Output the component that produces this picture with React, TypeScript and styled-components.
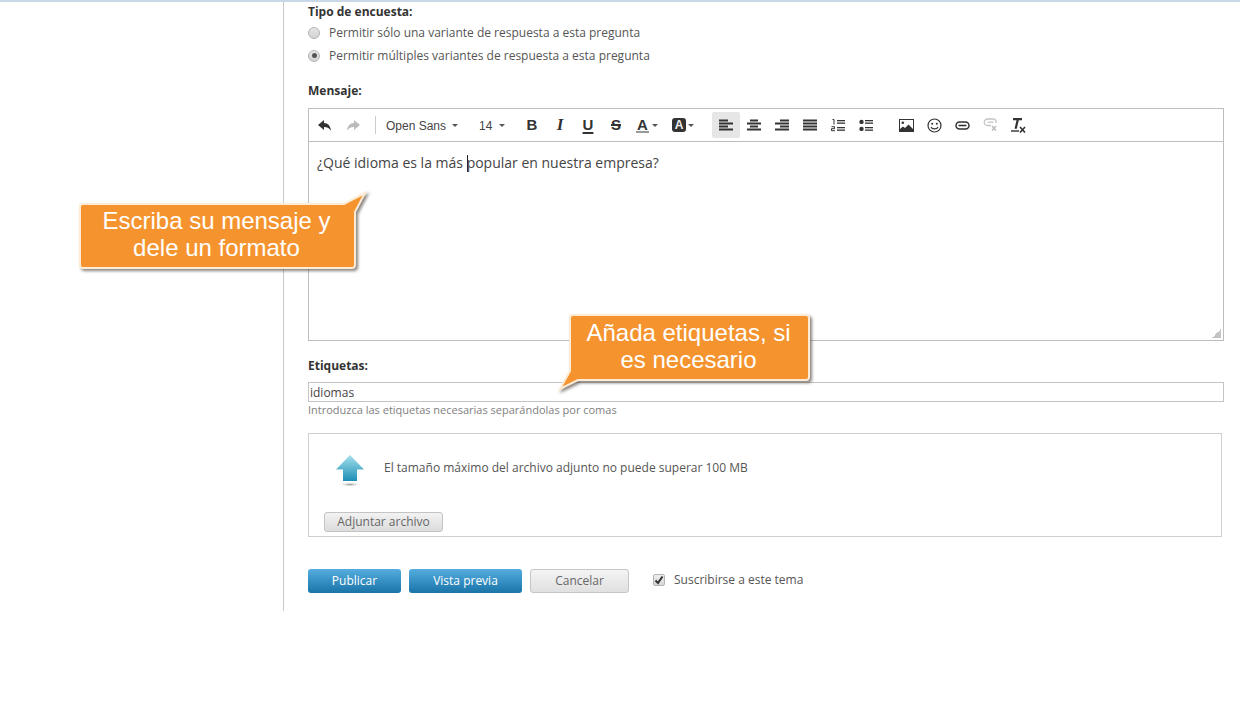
import React from "react";
import styled, { createGlobalStyle } from "styled-components";

const Global = createGlobalStyle`
  html, body { margin: 0; padding: 0; background: #fff; }
  body { font-family: "Open Sans", "Liberation Sans", sans-serif; color: #444; overflow: hidden; }
`;

const Page = styled.div`
  position: relative;
  width: 1240px;
  height: 708px;
  border-top: 2px solid #c9d8e8;
  box-sizing: border-box;
  overflow: hidden;
`;
const Shell = styled.div`
  display: flex;
  height: 609px;
`;
const Sidebar = styled.aside`
  width: 283px;
  border-right: 1px solid #c8c8c8;
`;
const Main = styled.main`
  width: 916px;
  margin-left: 24px;
  display: flex;
  flex-direction: column;
`;
const FieldLabel = styled.div<{ $top: number; $h?: number }>`
  margin-top: ${(p) => p.$top}px;
  height: ${(p) => p.$h ?? 20}px;
  line-height: 20px;
  font-size: 12px;
  font-weight: 700;
  color: #333;
`;
const RadioRow = styled.label`
  display: flex;
  align-items: center;
  height: 23px;
  font-size: 12px;
  color: #555;
`;
const Radio = styled.span<{ $on?: boolean }>`
  position: relative;
  width: 12px;
  height: 12px;
  margin-right: 9px;
  border: 1px solid #b4b4b4;
  border-radius: 50%;
  box-sizing: border-box;
  background: linear-gradient(#e6e6e6, #d2d2d2);
  &::after {
    content: "";
    display: ${(p) => (p.$on ? "block" : "none")};
    position: absolute;
    left: 2.5px;
    top: 2.5px;
    width: 5px;
    height: 5px;
    border-radius: 50%;
    background: #555;
  }
`;
const Editor = styled.div`
  margin-top: 7px;
  height: 233px;
  border: 1px solid #bdbdbd;
  box-sizing: border-box;
  display: flex;
  flex-direction: column;
`;
const Toolbar = styled.div`
  display: flex;
  align-items: center;
  height: 32px;
  padding-left: 2px;
  border-bottom: 1px solid #bdbdbd;
  flex: none;
`;
const ToolBtn = styled.span<{ $active?: boolean; $gap?: number }>`
  display: flex;
  align-items: center;
  justify-content: center;
  flex: none;
  width: 28px;
  height: 26px;
  margin-left: ${(p) => p.$gap ?? 0}px;
  border-radius: 2px;
  background: ${(p) => (p.$active ? "#e6e6e6" : "transparent")};
  color: #333;
`;
const Sep = styled.span`
  width: 1px;
  height: 18px;
  margin: 0 10px 0 8px;
  background: #ccc;
  flex: none;
`;
const Drop = styled.span<{ $w: number; $gap?: number }>`
  display: flex;
  align-items: center;
  justify-content: space-between;
  flex: none;
  width: ${(p) => p.$w}px;
  margin-left: ${(p) => p.$gap ?? 0}px;
  padding-top: 1px;
  font-family: "Liberation Sans", Arial, sans-serif;
  font-size: 12px;
  color: #444;
`;
const Caret = styled.span`
  width: 0;
  height: 0;
  border-left: 3px solid transparent;
  border-right: 3px solid transparent;
  border-top: 3px solid #555;
`;
const Letter = styled.span<{ $italic?: boolean; $under?: boolean; $strike?: boolean }>`
  font-family: ${(p) => (p.$italic ? '"Liberation Serif"' : '"Liberation Sans"')}, Arial, sans-serif;
  font-size: ${(p) => (p.$italic ? 17 : 15)}px;
  font-weight: 700;
  line-height: 14px;
  color: #333;
  font-style: ${(p) => (p.$italic ? "italic" : "normal")};
  text-decoration: ${(p) => (p.$under ? "underline" : p.$strike ? "line-through" : "none")};
  text-decoration-thickness: 2px;
  text-underline-offset: 2px;
`;
const ColorA = styled.span`
  font-family: "Liberation Sans", Arial, sans-serif;
  font-size: 15px;
  font-weight: 700;
  line-height: 13px;
  color: #333;
  border-bottom: 2px solid #999;
  padding: 0 1px;
  margin-right: 3px;
`;
const BoxA = styled.span`
  width: 14px;
  height: 14px;
  border-radius: 3px;
  background: #333;
  color: #eee;
  font-family: "Liberation Sans", Arial, sans-serif;
  font-size: 12px;
  font-weight: 700;
  line-height: 14px;
  text-align: center;
  margin-right: 2px;
`;
const Body = styled.div`
  position: relative;
  flex: 1;
  padding: 11px 8px;
  font-size: 14px;
  line-height: 20px;
  color: #444;
`;
const TextCaret = styled.span`
  display: inline-block;
  width: 1px;
  height: 17px;
  margin-right: -1px;
  vertical-align: -4px;
  background: #222;
`;
const Grip = styled.span`
  position: absolute;
  right: 2px;
  bottom: 2px;
  width: 9px;
  height: 9px;
  background: linear-gradient(135deg, transparent 50%, #c4c4c4 50%);
`;
const TagInput = styled.div`
  margin-top: 6px;
  height: 20px;
  border: 1px solid #c4c4c4;
  box-sizing: border-box;
  padding-left: 1px;
  font-size: 12px;
  line-height: 19px;
  color: #444;
`;
const Hint = styled.div`
  height: 16px;
  line-height: 16px;
  font-size: 11px;
  color: #808080;
`;
const AttachBox = styled.section`
  margin-top: 15px;
  width: 914px;
  height: 104px;
  border: 1px solid #cfcfcf;
  box-sizing: border-box;
  padding: 21px 15px 0;
  display: flex;
  flex-direction: column;
  align-items: flex-start;
`;
const AttachInfo = styled.div`
  display: flex;
  align-items: flex-start;
  height: 57px;
  padding-left: 12px;
  font-size: 12px;
  color: #555;
`;
const AttachText = styled.span`
  margin-left: 20px;
  line-height: 26px;
`;
const AttachBtn = styled.button`
  width: 119px;
  height: 20px;
  padding: 0 0 2px;
  border: 1px solid #c4c4c4;
  border-radius: 3px;
  background: linear-gradient(#f2f2f2, #dcdcdc);
  font-family: inherit;
  font-size: 12px;
  color: #666;
`;
const Actions = styled.div`
  margin-top: 32px;
  display: flex;
  align-items: center;
`;
const Btn = styled.button<{ $w: number; $ghost?: boolean }>`
  width: ${(p) => p.$w}px;
  height: 24px;
  margin-right: 8px;
  padding: 0 0 2px;
  border-radius: 3px;
  border: ${(p) => (p.$ghost ? "1px solid #c6c6c6" : "none")};
  background: ${(p) =>
    p.$ghost ? "linear-gradient(#f4f4f4, #e0e0e0)" : "linear-gradient(#55addf, #1a74a8)"};
  color: ${(p) => (p.$ghost ? "#666" : "#fff")};
  font-family: inherit;
  font-size: 12px;
  font-weight: ${(p) => (p.$ghost ? 400 : 500)};
`;
const Subscribe = styled.label`
  display: flex;
  align-items: center;
  margin: -3px 0 0 16px;
  font-size: 12px;
  color: #555;
`;
const Check = styled.span`
  display: flex;
  align-items: center;
  justify-content: center;
  width: 12px;
  height: 12px;
  margin-right: 9px;
  border: 1px solid #b4b4b4;
  border-radius: 2px;
  box-sizing: border-box;
  background: linear-gradient(#eee, #d6d6d6);
`;
const Bubble = styled.div<{ $x: number; $y: number; $w: number; $h: number }>`
  position: absolute;
  left: ${(p) => p.$x}px;
  top: ${(p) => p.$y}px;
  width: ${(p) => p.$w}px;
  height: ${(p) => p.$h}px;
  padding-bottom: 4px;
  box-sizing: border-box;
  display: flex;
  align-items: center;
  justify-content: center;
  text-align: center;
  font-family: "Liberation Sans", Arial, sans-serif;
  font-size: 24px;
  line-height: 27px;
  color: #fff;
`;
const BubbleShape = styled.svg`
  position: absolute;
  left: -20px;
  top: -20px;
  overflow: visible;
  filter: drop-shadow(2px 2px 1.5px rgba(60, 50, 40, 0.6));
`;
const BubbleText = styled.span`
  position: relative;
  left: -1px;
`;

const S = { fill: "none", stroke: "#333" } as const;

const Undo = ({ color = "#333" }: { color?: string }) => (
  <svg width="16" height="14" viewBox="0 0 16 14"><path d="M7 2 1 7l6 5V9c3 0 5 1 7 3.500C13.500 8 11 5 7 5z" fill={color} /></svg>
);
const Redo = ({ color = "#bbb" }: { color?: string }) => (
  <svg width="16" height="14" viewBox="0 0 16 14"><path d="M9 2l6 5-6 5V9c-3 0-5 1-7 3.500C2.500 8 5 5 9 5z" fill={color} /></svg>
);
const Align = ({ rows }: { rows: [number, number][] }) => (
  <svg width="14" height="12" viewBox="0 0 14 12">
    {rows.map(([x, w], i) => (
      <rect key={i} x={x} y={i * 3 + 0.500} width={w} height="2" fill="#333" />
    ))}
  </svg>
);
const ListLines = () => (
  <>
    <rect x="6" y="1" width="8" height="1.300" fill="#333" />
    <rect x="6" y="3.500" width="8" height="1.300" fill="#333" />
    <rect x="6" y="8" width="8" height="1.300" fill="#333" />
    <rect x="6" y="10.500" width="8" height="1.300" fill="#333" />
  </>
);
const OrderedList = () => (
  <svg width="14" height="13" viewBox="0 0 14 13">
    <path d="M1.500 0.500h1.500v5M0.500 7.700h3v2h-3v2h3.500" {...S} strokeWidth="1" />
    <ListLines />
  </svg>
);
const BulletList = () => (
  <svg width="14" height="13" viewBox="0 0 14 13">
    <circle cx="2.500" cy="2.900" r="2.200" fill="#333" />
    <circle cx="2.500" cy="9.900" r="2.200" fill="#333" />
    <ListLines />
  </svg>
);
const ImageIcon = () => (
  <svg width="15" height="13" viewBox="0 0 15 13">
    <rect x="0.500" y="0.500" width="14" height="12" fill="#fff" stroke="#333" />
    <circle cx="3.800" cy="3.800" r="1.300" fill="#333" />
    <path d="M1 12V10l3-2.500 2 1.500 3.500-3.500L14 10v2z" fill="#333" />
  </svg>
);
const Smile = () => (
  <svg width="15" height="15" viewBox="0 0 15 15">
    <circle cx="7.500" cy="7.500" r="6.500" {...S} strokeWidth="1.200" />
    <circle cx="5.200" cy="5.800" r="1" fill="#333" />
    <circle cx="9.800" cy="5.800" r="1" fill="#333" />
    <path d="M4 9c1 2.500 6 2.500 7 0" {...S} strokeWidth="1.200" />
  </svg>
);
const LinkIcon = () => (
  <svg width="15" height="9" viewBox="0 0 15 9">
    <rect x="1" y="1" width="13" height="7" rx="3.500" {...S} strokeWidth="1.500" />
    <path d="M3.500 4.500h8" {...S} strokeWidth="1.600" />
  </svg>
);
const Unlink = () => (
  <svg width="15" height="14" viewBox="0 0 15 14">
    <path d="M8 7.500H4.500a3 3 0 0 1 0-6.500h6a3 3 0 0 1 2.500 4M4.500 4.200h6" fill="none" stroke="#c4c4c4" strokeWidth="1.300" />
    <path d="M9 8l4 4.500M13 8l-4 4.500" fill="none" stroke="#bbb" strokeWidth="1.500" />
  </svg>
);
const ClearFormat = () => (
  <svg width="16" height="16" viewBox="0 0 16 16">
    <path d="M3 1h9v2.200h-3.200l-2 8.500H4.500l2-8.500H3z" fill="#333" />
    <rect x="1" y="13.300" width="8" height="1.400" fill="#333" />
    <path d="M10 10l5 5.500M15 10l-5 5.500" {...S} strokeWidth="1.600" />
  </svg>
);
const UploadArrow = () => (
  <svg width="28" height="32" viewBox="0 0 28 32">
    <defs>
      <linearGradient id="up" x1="0" y1="0" x2="0" y2="1">
        <stop offset="0" stopColor="#a5e0ee" />
        <stop offset="1" stopColor="#1d8fb4" />
      </linearGradient>
      <radialGradient id="sh">
        <stop offset="0" stopColor="#999" />
        <stop offset="1" stopColor="#fff" stopOpacity="0" />
      </radialGradient>
    </defs>
    <path d="M14 0l14 14.500h-7V26H7V14.500H0z" fill="url(#up)" />
    <ellipse cx="14" cy="29.500" rx="12" ry="2.500" fill="url(#sh)" />
  </svg>
);

const App: React.FC = () => (
  <Page>
    <Global />
    <Shell>
      <Sidebar />
      <Main>
        <FieldLabel $top={0} $h={19}>Tipo de encuesta:</FieldLabel>
        <RadioRow><Radio />Permitir sólo una variante de respuesta a esta pregunta</RadioRow>
        <RadioRow><Radio $on />Permitir múltiples variantes de respuesta a esta pregunta</RadioRow>
        <FieldLabel $top={14}>Mensaje:</FieldLabel>
        <Editor>
          <Toolbar>
            <ToolBtn><Undo /></ToolBtn>
            <ToolBtn><Redo /></ToolBtn>
            <Sep />
            <Drop $w={72}>Open Sans <Caret /></Drop>
            <Drop $w={26} $gap={21}>14 <Caret /></Drop>
            <ToolBtn $gap={13}><Letter>B</Letter></ToolBtn>
            <ToolBtn><Letter $italic>I</Letter></ToolBtn>
            <ToolBtn><Letter $under>U</Letter></ToolBtn>
            <ToolBtn><Letter $strike>S</Letter></ToolBtn>
            <ToolBtn $gap={3}><ColorA>A</ColorA><Caret /></ToolBtn>
            <ToolBtn $gap={8}><BoxA>A</BoxA><Caret /></ToolBtn>
            <ToolBtn $active $gap={15}><Align rows={[[0, 9], [0, 14], [0, 9], [0, 14]]} /></ToolBtn>
            <ToolBtn><Align rows={[[3, 8], [0, 14], [3, 8], [0, 14]]} /></ToolBtn>
            <ToolBtn><Align rows={[[5, 9], [0, 14], [5, 9], [0, 14]]} /></ToolBtn>
            <ToolBtn><Align rows={[[0, 14], [0, 14], [0, 14], [0, 14]]} /></ToolBtn>
            <ToolBtn><OrderedList /></ToolBtn>
            <ToolBtn><BulletList /></ToolBtn>
            <ToolBtn $gap={12}><ImageIcon /></ToolBtn>
            <ToolBtn><Smile /></ToolBtn>
            <ToolBtn><LinkIcon /></ToolBtn>
            <ToolBtn><Unlink /></ToolBtn>
            <ToolBtn><ClearFormat /></ToolBtn>
          </Toolbar>
          <Body>
            ¿Qué idioma es la más <TextCaret />popular en nuestra empresa?
            <Grip />
          </Body>
        </Editor>
        <FieldLabel $top={15}>Etiquetas:</FieldLabel>
        <TagInput>idiomas</TagInput>
        <Hint>Introduzca las etiquetas necesarias separándolas por comas</Hint>
        <AttachBox>
          <AttachInfo>
            <UploadArrow />
            <AttachText>El tamaño máximo del archivo adjunto no puede superar 100 MB</AttachText>
          </AttachInfo>
          <AttachBtn>Adjuntar archivo</AttachBtn>
        </AttachBox>
        <Actions>
          <Btn $w={93}>Publicar</Btn>
          <Btn $w={113}>Vista previa</Btn>
          <Btn $w={99} $ghost>Cancelar</Btn>
          <Subscribe>
            <Check>
              <svg width="10" height="10" viewBox="0 0 10 10"><path d="M1.500 5.500 4 8l4.500-6.500" fill="none" stroke="#333" strokeWidth="2" /></svg>
            </Check>
            Suscribirse a este tema
          </Subscribe>
        </Actions>
      </Main>
    </Shell>
    <Bubble $x={80} $y={202} $w={275} $h={64}>
      <BubbleShape width="315" height="104" viewBox="0 0 315 104">
        <path d="M23 20H284L305 9 295 28V81q0 3-3 3H23q-3 0-3-3V23q0-3 3-3z" fill="#f5942f" stroke="#fdebd6" strokeWidth="2" />
      </BubbleShape>
      <BubbleText>Escriba su mensaje y<br />dele un formato</BubbleText>
    </Bubble>
    <Bubble $x={570} $y={313} $w={239} $h={65}>
      <BubbleShape width="279" height="105" viewBox="0 0 279 105">
        <path d="M23 20H256q3 0 3 3V82q0 3-3 3H28L10 94 20 76V23q0-3 3-3z" fill="#f5942f" stroke="#fdebd6" strokeWidth="2" />
      </BubbleShape>
      <BubbleText>Añada etiquetas, si<br />es necesario</BubbleText>
    </Bubble>
  </Page>
);

export default App;
